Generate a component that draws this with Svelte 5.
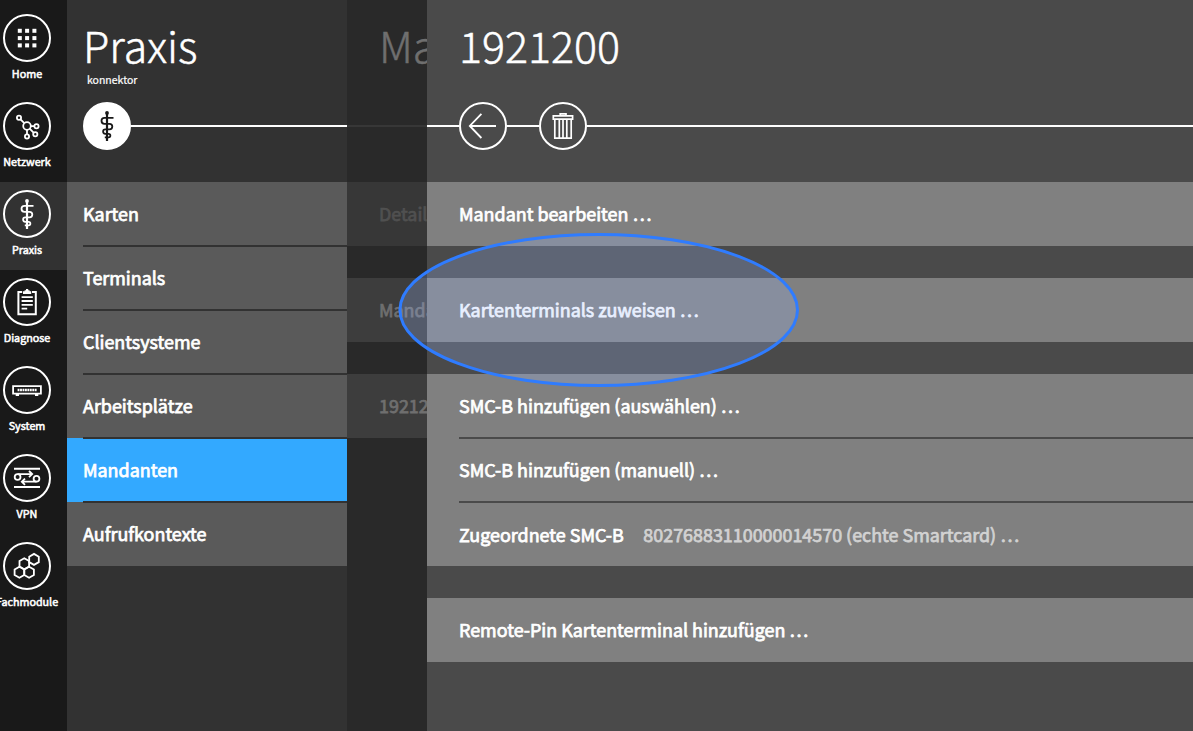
<script>
  const rail = [
    { id: 'home', label: 'Home' },
    { id: 'network', label: 'Netzwerk' },
    { id: 'staff', label: 'Praxis', active: true },
    { id: 'clipboard', label: 'Diagnose' },
    { id: 'system', label: 'System' },
    { id: 'vpn', label: 'VPN' },
    { id: 'modules', label: 'Fachmodule' }
  ];
  const menu = ['Karten', 'Terminals', 'Clientsysteme', 'Arbeitsplätze', 'Mandanten', 'Aufrufkontexte'];
  const previous = ['Details', 'Mandanten', '1921200'];
  const groups = [
    [{ label: 'Mandant bearbeiten …' }],
    [{ label: 'Kartenterminals zuweisen …' }],
    [
      { label: 'SMC-B hinzufügen (auswählen) …' },
      { label: 'SMC-B hinzufügen (manuell) …' },
      { label: 'Zugeordnete SMC-B', value: '80276883110000014570 (echte Smartcard) …' }
    ],
    [{ label: 'Remote-Pin Kartenterminal hinzufügen …' }]
  ];
  const dots = [14.8, 22.1, 29.4];
  const hexes = [[31, 17.4], [21.3, 21.7], [16.4, 30.3], [26.1, 30.3]];
</script>

{#snippet icon(id)}
  <svg viewBox="0 0 48 48" width="48" height="48" fill="none" stroke="currentColor" stroke-width="1.8">
    {#if id === 'home'}
      {#each dots as y}{#each dots as x}<rect {x} {y} width="4" height="4" fill="currentColor" stroke="none" />{/each}{/each}
    {:else if id === 'network'}
      <circle cx="24" cy="24" r="3.8" />
      <circle cx="16" cy="15.8" r="2.1" />
      <circle cx="33.5" cy="24.2" r="2.1" />
      <circle cx="32.3" cy="32.3" r="2.1" />
      <circle cx="24" cy="34.4" r="2.1" />
      <path d="M17.5 17.3 21.3 21.2M27.8 24.1H31.4M26.7 26.7 30.8 30.8M24 27.8V32.3" />
    {:else if id === 'staff'}
      <circle cx="24" cy="10.9" r="1.9" fill="currentColor" stroke="none" />
      <path d="M24 11V39" stroke-width="2.2" />
      <path d="M30.5 15.8H21.5a3 3 0 0 0 0 6H26.5a2.8 2.8 0 0 1 0 5.6H22.3a2.2 2.2 0 0 0 0 4.4H25.6a1.7 1.7 0 0 1 0 3.5H21.8" />
    {:else if id === 'clipboard'}
      <path d="M19.2 14H15.4V36.2H32.8V14H29" stroke-width="2" />
      <path d="M20 16V13.3H21.6V12.2H23V11H25.2V12.2H26.6V13.3H28.2V16Z" fill="currentColor" stroke="none" />
      <path d="M18.6 19.2H29.8M18.6 23H29.8M18.6 26.8H29.8M18.6 30.6H24.2" />
    {:else if id === 'system'}
      <path d="M10.1 20.1H37.9V27.7H10.1ZM12.7 29.2H16M32 29.2H35.3" />
      <path d="M14.6 24H33.6" stroke-width="2.4" stroke-dasharray="1.9 .55" />
    {:else if id === 'vpn'}
      <path d="M11 14.8H37M11 33H37" stroke-width="2" />
      <circle cx="14.6" cy="23" r="2.9" />
      <circle cx="33.5" cy="24.8" r="2.9" />
      <path d="M14.6 20.1H29M26 17 29.2 20.1 26 23.2M33.5 27.7H19M22 24.6 18.8 27.7 22 30.8" />
    {:else if id === 'modules'}
      {#each hexes as [x, y]}<path d="M{x} {y - 5.5}l4.8 2.75v5.5l-4.8 2.75l-4.8-2.75v-5.5z" />{/each}
    {:else if id === 'back'}
      <path d="M37 24H10.8M22.4 11.8 10.8 24 22.4 36" />
    {:else if id === 'trash'}
      <path d="M14.3 13.8H33.6V17.2H14.3ZM21.2 13.4V11.9H27V13.4M15.8 17.4V36.2H32.2V17.4M20.3 18V36M24 18V36M27.8 18V36" stroke-width="1.7" />
    {/if}
  </svg>
{/snippet}

<div class="app">
  <nav class="rail">
    {#each rail as item}
      <a class="rail-item" class:active={item.active}>
        <span class="circle">{@render icon(item.id)}</span>
        <span class="rail-label">{item.label}</span>
      </a>
    {/each}
  </nav>

  <section class="panel menu">
    <header>
      <h1>Praxis</h1>
      <p class="sub">konnektor</p>
      <div class="toolbar">
        <span class="circle filled">{@render icon('staff')}</span>
        <i class="line"></i>
      </div>
    </header>
    <div class="group">
      {#each menu as item}
        <div class="row" class:selected={item === 'Mandanten'}>{item}</div>
      {/each}
    </div>
  </section>

  <section class="panel previous">
    <header>
      <h1>Mandanten</h1>
      <div class="toolbar"><i class="line"></i></div>
    </header>
    {#each previous as item, n}
      <div class="group"><div class="row" class:dim={n === 0}>{item}</div></div>
    {/each}
  </section>

  <section class="panel detail">
    <header>
      <h1>1921200</h1>
      <div class="toolbar">
        <i class="line lead"></i>
        <span class="circle">{@render icon('back')}</span>
        <i class="line lead"></i>
        <span class="circle">{@render icon('trash')}</span>
        <i class="line"></i>
      </div>
    </header>
    {#each groups as group}
      <div class="group">
        {#each group as item}
          <div class="row" class:pair={item.value}>
            <span>{item.label}</span>
            {#if item.value}<span class="value">{item.value}</span>{/if}
          </div>
        {/each}
      </div>
    {/each}
  </section>

  <svg class="highlight" width="404" height="158" viewBox="0 0 404 158">
    <ellipse cx="201.7" cy="79" rx="198.8" ry="75.6" />
  </svg>
</div>

<style>
  :global(body) { margin: 0; background: #4a4a4a; }
  .app {
    position: relative;
    display: flex;
    height: 731px;
    overflow: hidden;
    color: #fff;
    font: 400 17.92px/62px 'Noto Sans CJK SC', 'Noto Sans', sans-serif;
    -webkit-text-stroke: 0.75px currentColor;
  }
  .rail {
    flex: 0 0 67px;
    box-sizing: border-box;
    padding-top: 6px;
    background: #191919;
    overflow: hidden;
  }
  .rail-item {
    display: flex;
    flex-direction: column;
    align-items: center;
    box-sizing: border-box;
    height: 88px;
    padding: 8px 13px 0 0;
  }
  .rail-item.active { background: #323232; }
  .rail-label {
    font-size: 10.75px;
    line-height: 16px;
    margin-top: 4px;
    white-space: nowrap;
    -webkit-text-stroke-width: 0.55px;
  }
  .circle {
    flex: none;
    display: block;
    box-sizing: border-box;
    width: 48px;
    height: 48px;
    border: 2px solid #fff;
    border-radius: 50%;
  }
  .circle svg { display: block; margin: -2px; }
  .filled { background: #fff; color: #191919; }

  .panel { flex: none; overflow: hidden; white-space: nowrap; }
  header {
    display: flex;
    flex-direction: column;
    box-sizing: border-box;
    height: 182px;
    padding-top: 19px;
  }
  h1 {
    margin: 0;
    font-size: 43px;
    line-height: 50px;
    font-weight: 300;
    -webkit-text-stroke-width: 0.5px;
  }
  .sub {
    margin: 3px 0 0 20px;
    font-size: 10.5px;
    line-height: 16px;
    -webkit-text-stroke-width: 0.2px;
  }
  .toolbar {
    display: flex;
    align-items: center;
    height: 48px;
    margin-top: auto;
    margin-bottom: 32px;
  }
  .line { flex: 1; height: 2px; background: #fff; }
  .lead { flex: 0 0 32px; }

  .group + .group { margin-top: 32px; }
  .row { position: relative; height: 64px; }
  .row + .row::before {
    content: '';
    position: absolute;
    top: -1px;
    right: 0;
    height: 2px;
  }

  .menu { width: 280px; background: #323232; }
  .menu h1 { padding-left: 16px; }
  .menu .toolbar { padding-left: 16px; }
  .menu .row { padding-left: 16px; background: #5a5a5a; }
  .menu .row + .row::before { left: 16px; background: #323232; }
  .menu .row.selected { background: #33a9ff; }

  .previous { width: 80px; background: #292929; color: #6f6f6f; }
  .previous h1, .previous .row { padding-left: 32px; }
  .previous .line { background: #373737; }
  .previous .row { background: #3d3d3d; }
  .previous .row.dim { background: #373737; color: #505050; }

  .detail { flex: 1; background: #4a4a4a; }
  .detail h1 { padding-left: 32px; }
  .detail .row { display: flex; padding-left: 32px; background: #808080; }
  .detail .row + .row::before { left: 32px; background: #4a4a4a; }
  .pair { line-height: 64px; }
  .value { margin-left: 19.5px; color: #d2d2d2; }

  .highlight { position: absolute; left: 397px; top: 231px; pointer-events: none; }
  .highlight ellipse {
    fill: rgba(158, 190, 255, 0.24);
    stroke: #2f7cff;
    stroke-width: 3;
  }
</style>
